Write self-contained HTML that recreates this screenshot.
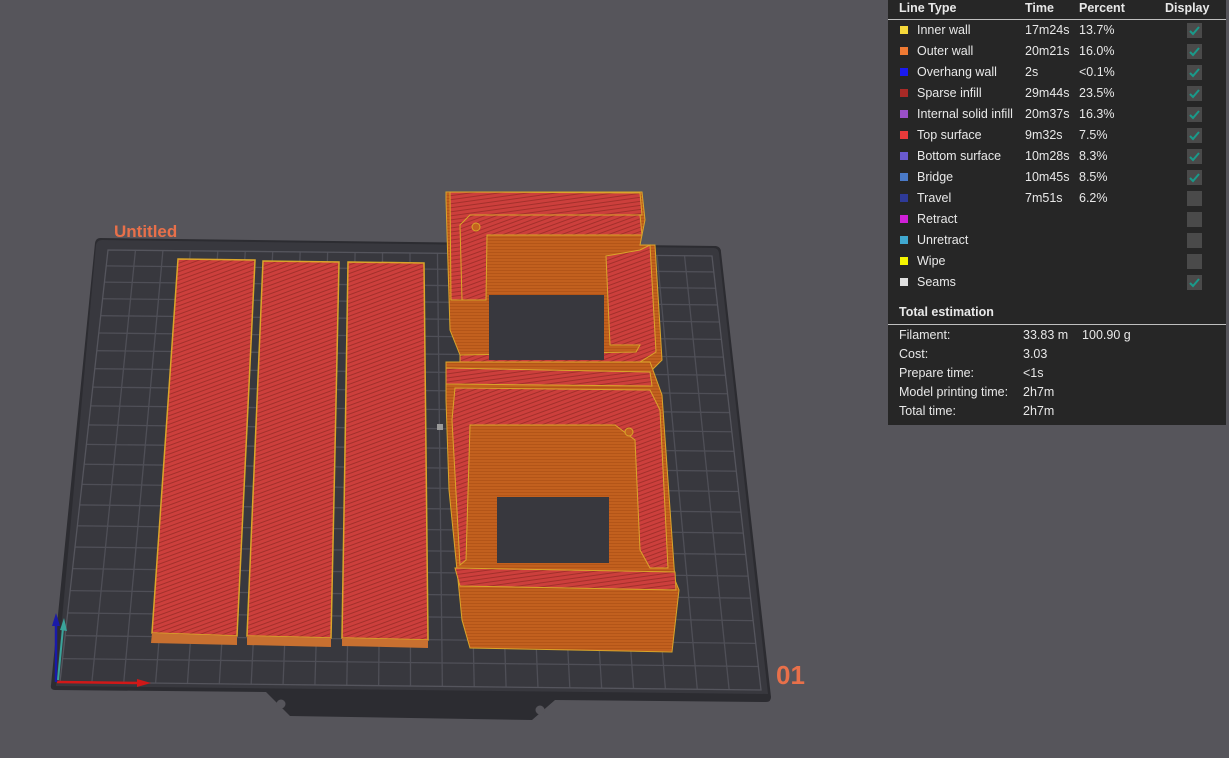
<!DOCTYPE html>
<html><head><meta charset="utf-8"><style>
html,body{margin:0;padding:0;width:1229px;height:758px;overflow:hidden;background:#56555b;font-family:"Liberation Sans",sans-serif}
svg{position:absolute;left:0;top:0}
#panel{position:absolute;left:888px;top:0;width:338px;height:425px;background:#262626;color:#e8e8e8;font-size:12.5px}
.hdr{position:absolute;top:0;height:20px;line-height:16px;font-weight:bold;font-size:12.5px}
.line{position:absolute;left:0;width:338px;height:1px;background:#bfbfbf}
.row{position:absolute;left:0;width:338px;height:21px;line-height:21px}
.sw{position:absolute;left:12px;top:6px;width:8px;height:8px}
.nm{position:absolute;left:29px}
.tm{position:absolute;left:137px}
.pc{position:absolute;left:191px}
.cb{position:absolute;left:299px;top:3px;width:15px;height:15px;background:#4a4a4a}
.cb svg{position:absolute;left:0;top:0}
.er{position:absolute;left:11px;height:19px;line-height:19px}
</style></head><body>
<svg width="1229" height="758" viewBox="0 0 1229 758">
<defs>
<pattern id="inf" width="4" height="4" patternUnits="userSpaceOnUse" patternTransform="rotate(70)">
<rect width="4" height="4" fill="#cc3f3c"/><rect width="1" height="4" fill="#a3302b"/></pattern>
<pattern id="infh" width="4" height="4" patternUnits="userSpaceOnUse" patternTransform="rotate(-8)">
<rect width="4" height="4" fill="#cc3f3c"/><rect width="4" height="1" fill="#a3302b"/></pattern>
<pattern id="org" width="3" height="3" patternUnits="userSpaceOnUse">
<rect width="3" height="3" fill="#c2601e"/><rect width="3" height="1" fill="#b35518"/></pattern>
</defs>
<!-- plate -->
<path d="M100,238 L716,246 Q721,247 721,252 L771,697 Q771,702 766,702 L555,700 L532,720 L290,716 L266,692 L55,690 Q50,690 51,685 L95,243 Q96,238 100,238Z" fill="#2c2c31"/>
<path d="M102,240 L714,248 Q718,248 719,253 L768,694 L56,686 L96,245 Q97,240 102,240Z" fill="#38383e"/>
<circle cx="281" cy="704" r="4.5" fill="#56555b"/><circle cx="540" cy="710" r="4.5" fill="#56555b"/>
<g stroke="#4f4f57" stroke-width="1.3" fill="none" id="grid"></g>
<path d="M108,250 L712,256 L761,690 L60,682 Z" fill="none" stroke="#55555d" stroke-width="1.3"/>
<text x="114" y="237" fill="#e8704a" font-size="17" font-weight="bold" font-family="Liberation Sans">Untitled</text>
<text x="776" y="684" fill="#e8704a" font-size="26" font-weight="bold" font-family="Liberation Sans">01</text>
<!-- strips -->
<g stroke="#d9a52a" stroke-width="1.5">
<path d="M178,259 L255,260 L237,636 L152,633Z" fill="url(#inf)"/>
<path d="M263,261 L339,262 L331,638 L247,636Z" fill="url(#inf)"/>
<path d="M348,262 L424,263 L428,640 L342,638Z" fill="url(#inf)"/>
</g>
<path d="M152,633 L237,636 L237,645 L151,643Z" fill="#c87030"/>
<path d="M247,636 L331,638 L331,647 L247,645Z" fill="#c87030"/>
<path d="M342,638 L428,640 L428,648 L342,646Z" fill="#c87030"/>
<!-- upper model -->
<g stroke="#d9a52a" stroke-width="1">
<path d="M446,192 L642,192 L645,220 L640,245 L655,245 L662,360 L650,372 L460,372 L460,355 L450,330 L446,200Z" fill="url(#org)"/>
<path d="M450,192 L640,193 L642,215 L470,215 L465,225 L465,300 L458,300 L451,300Z" fill="url(#infh)"/>
<path d="M470,215 L640,215 L642,235 L487,235 L486,300 L462,300 L460,225Z" fill="url(#inf)"/>
<path d="M606,256 L640,250 L650,245 L656,352 L640,362 L460,362 L460,355 L636,352 L640,345 L610,345Z" fill="url(#inf)"/>
</g>
<rect x="489" y="295" width="115" height="65" fill="#38383e"/>
<!-- lower model -->
<g stroke="#d9a52a" stroke-width="1">
<path d="M446,362 L650,362 L662,395 L675,580 L679,590 L672,652 L470,648 L462,620 L458,580 L449,490 L446,400Z" fill="url(#org)"/>
<path d="M455,388 L650,390 L660,410 L668,568 L650,568 L640,550 L635,440 L615,425 L470,425 L466,560 L460,565 L452,420Z" fill="url(#inf)"/>
<path d="M455,568 L675,572 L676,590 L460,586Z" fill="url(#infh)"/>
<path d="M446,368 L650,372 L652,386 L446,384Z" fill="url(#infh)"/>
</g>
<rect x="497" y="497" width="112" height="66" fill="#38383e"/>
<circle cx="476" cy="227" r="4" fill="#c4621f" stroke="#d9a52a"/>
<circle cx="629" cy="432" r="4" fill="#c4621f" stroke="#d9a52a"/>
<rect x="437" y="424" width="6" height="6" fill="#9a9a9a"/>
<!-- axes -->
<line x1="57" y1="682" x2="140" y2="683" stroke="#d01818" stroke-width="2.5"/>
<path d="M137,679 L151,683 L137,687Z" fill="#d01818"/>
<line x1="56" y1="682" x2="56" y2="624" stroke="#1a1aa8" stroke-width="2.5"/>
<path d="M52,626 L56,613 L60,626Z" fill="#1a1aa8"/>
<line x1="58" y1="680" x2="63" y2="628" stroke="#3aa39a" stroke-width="2"/>
<path d="M60,630 L64,618 L67,631Z" fill="#3aa39a"/>
</svg>
<script>
(function(){var g=document.getElementById('grid');var s='';
var TL=[108,250],TR=[712,256],BL=[60,682],BR=[761,690];
function L(a,b,t){return [a[0]+(b[0]-a[0])*t,a[1]+(b[1]-a[1])*t];}
for(var i=1;i<22;i++){var t=i/22;var p=L(TL,TR,t),q=L(BL,BR,t);s+='<line x1="'+p[0]+'" y1="'+p[1]+'" x2="'+q[0]+'" y2="'+q[1]+'"/>';}
for(var j=1;j<22;j++){var u=j/22;u=u*(0.8+0.2*u);var p=L(TL,BL,u),q=L(TR,BR,u);s+='<line x1="'+p[0]+'" y1="'+p[1]+'" x2="'+q[0]+'" y2="'+q[1]+'"/>';}
g.innerHTML=s;})();
</script>
<div id="panel">
<div class="hdr" style="left:11px">Line Type</div><div class="hdr" style="left:137px">Time</div><div class="hdr" style="left:191px">Percent</div><div class="hdr" style="left:277px">Display</div>
<div class="line" style="top:19px"></div>
<div id="rows"></div>
<div class="hdr" style="left:11px;top:304px">Total estimation</div>
<div class="line" style="top:324px"></div>
<div class="er" style="top:326px">Filament:<span style="position:absolute;left:124px;white-space:nowrap">33.83 m&nbsp;&nbsp;&nbsp;&nbsp;100.90 g</span></div>
<div class="er" style="top:345px">Cost:<span style="position:absolute;left:124px">3.03</span></div>
<div class="er" style="top:364px;white-space:nowrap">Prepare time:<span style="position:absolute;left:124px">&lt;1s</span></div>
<div class="er" style="top:383px;white-space:nowrap">Model printing time:<span style="position:absolute;left:124px">2h7m</span></div>
<div class="er" style="top:402px;white-space:nowrap">Total time:<span style="position:absolute;left:124px">2h7m</span></div>
</div>
<script>
var R=[["#f5d83a","Inner wall","17m24s","13.7%",1],["#f07a33","Outer wall","20m21s","16.0%",1],["#1a1af0","Overhang wall","2s","<0.1%",1],["#a82a26","Sparse infill","29m44s","23.5%",1],["#9a50c8","Internal solid infill","20m37s","16.3%",1],["#e83a3a","Top surface","9m32s","7.5%",1],["#6a5ad0","Bottom surface","10m28s","8.3%",1],["#4a7ac8","Bridge","10m45s","8.5%",1],["#2e3a98","Travel","7m51s","6.2%",0],["#d020d8","Retract","","",0],["#40a8d0","Unretract","","",0],["#f5f500","Wipe","","",0],["#e0e0e0","Seams","","",1]];
var h='';R.forEach(function(r,i){h+='<div class="row" style="top:'+(20+i*21)+'px"><div class="sw" style="background:'+r[0]+'"></div><span class="nm">'+r[1]+'</span><span class="tm">'+r[2]+'</span><span class="pc">'+r[3].replace('<','&lt;')+'</span><div class="cb">'+(r[4]?'<svg width="15" height="15"><path d="M3,8 L6,11 L12,4" stroke="#1a9a8a" stroke-width="2" fill="none"/></svg>':'')+'</div></div>';});
document.getElementById('rows').innerHTML=h;
</script>
</body></html>
